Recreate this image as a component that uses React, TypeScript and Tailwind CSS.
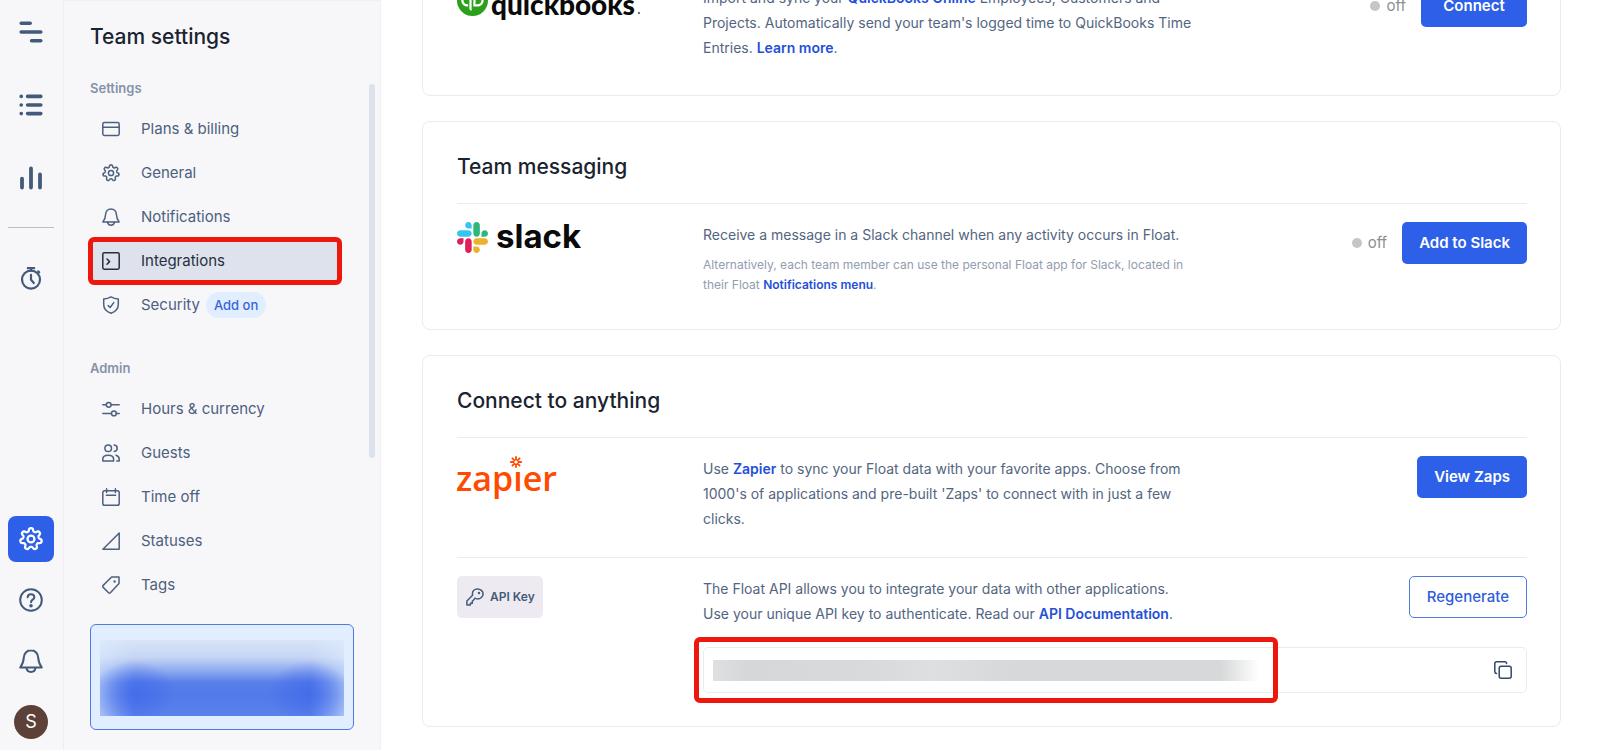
import type { ReactNode } from 'react'
import { SiQuickbooks } from 'react-icons/si'

// Seven rounded teeth around a centre, sampled in polar coordinates
function gearPath(cx: number, cy: number, radius: number, depth: number) {
  const points: string[] = []
  for (let i = 0; i < 140; i++) {
    const angle = (i / 140) * Math.PI * 2
    const r = radius + depth * Math.tanh(1.8 * Math.cos(7 * angle))
    points.push(`${(cx + r * Math.sin(angle)).toFixed(2)} ${(cy - r * Math.cos(angle)).toFixed(2)}`)
  }
  return `M${points.join('L')}Z`
}

function Icon({ size = 18, stroke = 1.5, children }: { size?: number; stroke?: number; children: ReactNode }) {
  return (
    <svg
      width={size}
      height={size}
      viewBox="0 0 18 18"
      fill="none"
      stroke="currentColor"
      strokeWidth={stroke}
      strokeLinecap="round"
      strokeLinejoin="round"
      className="shrink-0"
      aria-hidden="true"
    >
      {children}
    </svg>
  )
}

const gear = (
  <>
    <path d={gearPath(9, 9, 7, 1.2)} />
    <circle cx="9" cy="9" r="2.6" />
  </>
)

const bell = (
  <>
    <path d="M9 1C5.8 1 3.7 3.4 3.6 6.4C3.5 9.4 2.9 11.2 0.9 13.9H17.1C15.1 11.2 14.5 9.4 14.4 6.4C14.3 3.4 12.2 1 9 1Z" />
    <path d="M5.6 14.2C5.8 16 7.2 17.2 9 17.2S12.2 16 12.4 14.2" />
  </>
)

const settingsItems = [
  {
    label: 'Plans & billing',
    icon: (
      <>
        <rect x="0.8" y="2.6" width="16.4" height="12.8" rx="1.6" />
        <path d="M1 7.2H17" />
      </>
    ),
  },
  { label: 'General', icon: gear },
  { label: 'Notifications', icon: bell },
  {
    label: 'Integrations',
    active: true,
    icon: (
      <>
        <rect x="0.8" y="0.8" width="16.4" height="16.4" rx="1.4" />
        <path d="M5 7L7.6 9.6L5 12.2" />
      </>
    ),
  },
  {
    label: 'Security',
    badge: 'Add on',
    icon: (
      <>
        <path d="M9 0.9C6.8 2.2 4.4 2.9 1.7 3V8.4C1.7 12.6 4.5 15.6 9 17.2C13.5 15.6 16.3 12.6 16.3 8.4V3C13.6 2.9 11.2 2.2 9 0.9Z" />
        <path d="M6.2 9.6L8.1 11.5L11.8 6.6" />
      </>
    ),
  },
]

const adminItems = [
  {
    label: 'Hours & currency',
    icon: (
      <>
        <path d="M0.8 4.8H4.2M9.2 4.8H17.2M0.8 13.4H9.4M14.4 13.4H17.2" />
        <circle cx="6.7" cy="4.8" r="2.4" />
        <circle cx="11.9" cy="13.4" r="2.4" />
      </>
    ),
  },
  {
    label: 'Guests',
    icon: (
      <>
        <circle cx="6.2" cy="4.3" r="3.3" />
        <path d="M0.8 17V15C0.8 12.6 3.2 11.2 6.2 11.2S11.6 12.6 11.6 15V17Z" />
        <path d="M12.2 1.1C14 1.3 15.2 2.6 15.2 4.3S14 7.3 12.2 7.5M14 11.3C16 11.9 17.2 13.2 17.2 15V17H14.8" />
      </>
    ),
  },
  {
    label: 'Time off',
    icon: (
      <>
        <rect x="0.8" y="2.8" width="16.4" height="14.4" rx="1.8" />
        <path d="M4.6 0.8V4.4M13.4 0.8V4.4M4.4 7.2H13.6" />
      </>
    ),
  },
  { label: 'Statuses', icon: <path d="M17.2 1V17.2H0.9Z" /> },
  {
    label: 'Tags',
    icon: (
      <>
        <path d="M9.6 1H17V7.6L8.6 16.6C8 17.3 7.2 17.3 6.6 16.7L1.2 11.4C0.6 10.8 0.6 10 1.2 9.4Z" />
        <circle cx="12.6" cy="5.4" r="0.5" fill="currentColor" />
      </>
    ),
  },
]

type Item = { label: string; icon: ReactNode; active?: boolean; badge?: string }

function NavGroup({ title, items }: { title: string; items: Item[] }) {
  return (
    <div>
      <h2 className="text-[13px] leading-5 font-semibold text-[#8492a9]">{title}</h2>
      <ul className="mt-[9px]">
        {items.map((item) => (
          <li key={item.label} className="relative h-11">
            <a
              href="#"
              className={`flex h-full items-center pl-3 mr-3.5 text-[15px] ${
                item.active ? 'bg-[#dde2ec] text-[#27303f]' : 'text-[#4d607e]'
              }`}
            >
              <Icon>{item.icon}</Icon>
              <span className="ml-[21px]">{item.label}</span>
              {item.badge && (
                <span className="ml-1.5 rounded-full bg-[#e0eeff] px-2 text-[13px] leading-[26px] font-medium text-[#3a63dd]">
                  {item.badge}
                </span>
              )}
            </a>
            {item.active && (
              <div className="pointer-events-none absolute -top-0.5 -bottom-0.5 -left-0.5 right-3 rounded-md border-5 border-[#ee170d]" />
            )}
          </li>
        ))}
      </ul>
    </div>
  )
}

function RailButton({ label, className = '', children }: { label: string; className?: string; children: ReactNode }) {
  return (
    <button aria-label={label} className={`flex size-[46px] items-center justify-center rounded-lg ${className}`}>
      {children}
    </button>
  )
}

function Rail() {
  return (
    <nav className="flex w-16 shrink-0 flex-col items-center border-r border-[#eceef2] pr-px pb-1 text-[#435a7b]">
      <div className="mt-[9px] flex flex-col gap-[27px]">
        <RailButton label="Schedule">
          <svg width="24" height="24" viewBox="0 0 24 24" stroke="currentColor" strokeWidth="3.6" strokeLinecap="round">
            <path d="M2.2 3.2H11.2M2.2 12H21.8M12.6 20.8H21.8" />
          </svg>
        </RailButton>
        <RailButton label="Projects">
          <svg width="24" height="24" viewBox="0 0 24 24" stroke="currentColor" strokeWidth="3.6" strokeLinecap="round">
            <path d="M2.2 3.4H2.3M2.2 12H2.3M2.2 20.6H2.3M8.6 3.4H21.8M8.6 12H21.8M8.6 20.6H21.8" />
          </svg>
        </RailButton>
        <RailButton label="Reports">
          <svg width="24" height="24" viewBox="0 0 24 24" stroke="currentColor" strokeWidth="3.8" strokeLinecap="round">
            <path d="M3 12.6V21.6M12 2.4V21.6M21 8.4V21.6" />
          </svg>
        </RailButton>
      </div>
      <div className="mt-[26px] h-px w-[46px] bg-[#b6bfcc]" />
      <RailButton label="Timer" className="mt-[27px]">
        <svg width="24" height="24" viewBox="0 0 24 24" fill="none" stroke="currentColor" strokeWidth="2.2" strokeLinecap="round">
          <circle cx="12" cy="13.6" r="9" />
          <path d="M12 8.8V13.6L14.8 17M8.8 2.2H15.2M12 2.2V4.6M19.2 5.4L20.2 6.4" />
        </svg>
      </RailButton>
      <div className="mt-auto flex flex-col items-center gap-[15px]">
        <RailButton label="Team settings" className="bg-[#2e5fe8] text-white">
          <Icon size={24} stroke={1.7}>{gear}</Icon>
        </RailButton>
        <RailButton label="Help">
          <Icon size={24} stroke={1.5}>
            <circle cx="9" cy="9" r="8.1" />
            <path d="M6.5 7C6.5 5.5 7.5 4.6 9 4.6S11.5 5.5 11.5 6.9C11.5 8.7 9 8.8 9 10.6" />
            <circle cx="9" cy="13.3" r="0.6" fill="currentColor" />
          </Icon>
        </RailButton>
        <RailButton label="Notifications">
          <Icon size={24} stroke={1.5}>{bell}</Icon>
        </RailButton>
        <button className="mt-1.5 mb-[7px] size-[34px] rounded-full bg-[#5d4037] text-lg leading-none text-white">S</button>
      </div>
    </nav>
  )
}

function Sidebar() {
  return (
    <aside className="relative w-[317px] shrink-0 border-t border-r border-[#eef0f3] pl-[26px]">
      <h1 className="mt-5 text-[21px] leading-8 font-medium text-[#1a2330]">Team settings</h1>
      <div className="mt-[25px] mr-[26px] flex flex-col gap-[31px]">
        <NavGroup title="Settings" items={settingsItems} />
        <NavGroup title="Admin" items={adminItems} />
      </div>
      <div className="mt-[17px] mr-[26px] h-[106px] rounded-md border border-[#5079e2] bg-[#e0eeff] px-[9px] py-[15px]">
        <div className="h-[76px] bg-[radial-gradient(ellipse_42px_32px_at_14%_70%,#3d67e9b0_0%,#3d67e960_50%,#3d67e900_100%),radial-gradient(ellipse_42px_32px_at_86%_70%,#3d67e9b0_0%,#3d67e960_50%,#3d67e900_100%),linear-gradient(to_right,#e0eeff90_0%,#e0eeff00_14%,#e0eeff00_86%,#e0eeff90_100%),linear-gradient(to_bottom,#d8e4f6_0%,#c6d6f4_22%,#8fabf0_40%,#587fea_56%,#527aea_72%,#5a81eb_100%)]" />
      </div>
      <div className="absolute top-[83px] right-[5px] h-[374px] w-1.5 rounded-full bg-[#dce3ec]" />
    </aside>
  )
}

function QuickbooksLogo() {
  return (
    <div className="flex items-start">
      <SiQuickbooks size={31} color="#2ca01c" aria-hidden="true" />
      <svg width="156" height="42" viewBox="0 0 156 42" role="img" aria-label="quickbooks">
        <text x="3" y="30" fontFamily="Lato" fontWeight="900" fontSize="28" fill="#0a0a0a">quickbooks</text>
        <circle cx="151" cy="28" r="1.2" fill="#777" />
      </svg>
    </div>
  )
}

function SlackLogo() {
  return (
    <div className="flex items-center">
      <svg width="31" height="31" viewBox="0 0 122.8 122.8" aria-hidden="true">
        <path d="M25.8 77.6c0 7.1-5.8 12.9-12.9 12.9S0 84.7 0 77.6s5.8-12.9 12.9-12.9h12.9v12.9zm6.5 0c0-7.1 5.8-12.9 12.9-12.9s12.9 5.8 12.9 12.9v32.3c0 7.1-5.8 12.9-12.9 12.9s-12.9-5.8-12.9-12.9V77.6z" fill="#e01e5a" />
        <path d="M45.2 25.8c-7.1 0-12.9-5.8-12.9-12.9S38.1 0 45.2 0s12.9 5.8 12.9 12.9v12.9H45.2zm0 6.5c7.1 0 12.9 5.8 12.9 12.9s-5.8 12.9-12.9 12.9H12.9C5.8 58.1 0 52.3 0 45.2s5.8-12.9 12.9-12.9h32.3z" fill="#36c5f0" />
        <path d="M97 45.2c0-7.1 5.8-12.9 12.9-12.9s12.9 5.8 12.9 12.9-5.8 12.9-12.9 12.9H97V45.2zm-6.5 0c0 7.1-5.8 12.9-12.9 12.9s-12.9-5.8-12.9-12.9V12.9C64.7 5.8 70.5 0 77.6 0s12.9 5.8 12.9 12.9v32.3z" fill="#2eb67d" />
        <path d="M77.6 97c7.1 0 12.9 5.8 12.9 12.9s-5.8 12.9-12.9 12.9-12.9-5.8-12.9-12.9V97h12.9zm0-6.5c-7.1 0-12.9-5.8-12.9-12.9s5.8-12.9 12.9-12.9h32.3c7.1 0 12.9 5.8 12.9 12.9s-5.8 12.9-12.9 12.9H77.6z" fill="#ecb22e" />
      </svg>
      <svg width="100" height="31" viewBox="0 0 100 31" role="img" aria-label="slack">
        <text x="8" y="26" fontFamily="Inter" fontWeight="700" fontSize="33" fill="#0a0a0a">slack</text>
      </svg>
    </div>
  )
}

function ZapierLogo() {
  return (
    <svg width="100" height="46" viewBox="0 0 100 46" role="img" aria-label="zapier">
      <text x="-1" y="35" fontFamily="Open Sans" fontWeight="600" fontSize="34" fill="#ff4a00">zapier</text>
      {/* the asterisk takes the place of the dot on the i */}
      <circle cx="59" cy="7" r="7" fill="#fff" />
      <path
        d="M59 0.2V4.4M59 7.6V11.8M53.2 6H57.4M60.6 6H64.8M54.9 1.9L57.9 4.9M60.1 7.1L63.1 10.1M63.1 1.9L60.1 4.9M57.9 7.1L54.9 10.1"
        stroke="#ff4a00"
        strokeWidth="1.8"
      />
    </svg>
  )
}

function Card({ title, className = '', children }: { title?: string; className?: string; children: ReactNode }) {
  return (
    <section className={`rounded-lg border border-[#e9ecee] pr-[33px] pl-[34px] ${className}`}>
      {title && (
        <h2 className="border-b border-[#e9ecee] pt-7 pb-[19px] text-[21px] leading-[34px] font-medium text-[#1a2330]">{title}</h2>
      )}
      {children}
    </section>
  )
}

function Row({ logo, actions, className = '', children }: { logo: ReactNode; actions: ReactNode; className?: string; children: ReactNode }) {
  return (
    <div className={`flex items-start pt-[18px] ${className}`}>
      <div className="w-[246px] shrink-0">{logo}</div>
      <div className="w-[500px] text-sm leading-[25px] text-[#536580]">{children}</div>
      <div className="ml-auto flex shrink-0 items-center gap-[15px]">{actions}</div>
    </div>
  )
}

function Off() {
  return (
    <span className="flex items-center gap-1.5 text-[15px] text-[#8c8f93]">
      <span className="size-2.5 rounded-full bg-[#c6c6c6]" />
      off
    </span>
  )
}

function Link({ children }: { children: ReactNode }) {
  return <a href="#" className="font-semibold text-[#2450d8]">{children}</a>
}

function PrimaryButton({ className = '', children }: { className?: string; children: ReactNode }) {
  return (
    <button className={`h-[42px] rounded-[5px] bg-[#2e5fe8] px-[17px] text-[15px] font-semibold text-white ${className}`}>
      {children}
    </button>
  )
}

export default function App() {
  return (
    <div className="flex h-screen overflow-hidden bg-white font-['Inter',sans-serif]">
      <div className="flex shrink-0 bg-[#f7f7fa]">
        <Rail />
        <Sidebar />
      </div>
      <main className="min-w-0 flex-1 pr-[39px] pl-[41px]">
        <div className="-mt-[34px] flex flex-col gap-[25px]">
          <Card className="pb-[35px]">
            <Row
              logo={<QuickbooksLogo />}
              actions={
                <>
                  <Off />
                  <PrimaryButton className="w-[106px]">Connect</PrimaryButton>
                </>
              }
            >
              Import and sync your <Link>QuickBooks Online</Link> Employees, Customers and
              <br />
              Projects. Automatically send your team's logged time to QuickBooks Time Entries. <Link>Learn more</Link>.
            </Row>
          </Card>

          <Card title="Team messaging" className="pb-[34px]">
            <Row
              logo={<SlackLogo />}
              actions={
                <>
                  <Off />
                  <PrimaryButton>Add to Slack</PrimaryButton>
                </>
              }
            >
              <p>Receive a message in a Slack channel when any activity occurs in Float.</p>
              <p className="mt-2 text-xs leading-5 text-[#919db0]">
                Alternatively, each team member can use the personal Float app for Slack, located in
                <br />
                their Float <Link>Notifications menu</Link>.
              </p>
            </Row>
          </Card>

          <Card title="Connect to anything" className="pb-[33px]">
            <Row
              logo={<ZapierLogo />}
              actions={<PrimaryButton>View Zaps</PrimaryButton>}
              className="border-b border-[#e9ecee] pb-[26px]"
            >
              Use <Link>Zapier</Link> to sync your Float data with your favorite apps. Choose from 1000's of
              applications and pre-built 'Zaps' to connect with in just a few
              <br />
              clicks.
            </Row>
            <Row
              logo={
                <div className="flex h-[42px] w-[86px] items-center gap-1.5 rounded-[5px] bg-[#edebf1] pl-[9px] text-[#435a7b]">
                  <Icon>
                    <path d="M11.4 0.9C8.6 0.9 6.4 3.1 6.4 5.9C6.4 6.4 6.5 6.9 6.6 7.3L0.9 13V17.1H4.4V15.2H6.3V13.2L8.3 11.2L8.9 10.2C9.7 10.6 10.5 10.9 11.4 10.9C14.5 10.9 17.1 8.7 17.1 5.9S14.5 0.9 11.4 0.9Z" />
                    <circle cx="13" cy="5" r="0.5" fill="currentColor" />
                  </Icon>
                  <span className="text-xs font-semibold">API Key</span>
                </div>
              }
              actions={
                <button className="h-[42px] rounded-[5px] border border-[#5079e2] px-[17px] text-[15px] font-medium text-[#2f5cdd]">
                  Regenerate
                </button>
              }
            >
              The Float API allows you to integrate your data with other applications.
              <br />
              Use your unique API key to authenticate. Read our <Link>API Documentation</Link>.
            </Row>
            <div className="relative mt-[21px] ml-[246px] flex h-[46px] items-center rounded-[5px] border border-[#e9ecee] pr-3.5 pl-[9px]">
              <input aria-label="API key" readOnly className="h-[21px] w-[546px] bg-[linear-gradient(to_right,#dfe0e1,#d5d7d8_6%,#d8dadb_30%,#dedfe0_40%,#d6d8d9_55%,#d6d8d9_93%,#ffffff_100%)]" />
              <button aria-label="Copy API key" className="ml-auto text-[#35486a]">
                <Icon>
                  <rect x="5.2" y="5.2" width="12" height="12" rx="2" />
                  <path d="M2.6 12.4C1.4 12.4 0.8 11.8 0.8 10.6V2.8C0.8 1.4 1.4 0.8 2.8 0.8H10.8C12 0.8 12.6 1.4 12.6 2.6" />
                </Icon>
              </button>
              <div className="pointer-events-none absolute -inset-y-[11px] -left-2.5 w-[584px] rounded-md border-5 border-[#ee170d]" />
            </div>
          </Card>
        </div>
      </main>
    </div>
  )
}
